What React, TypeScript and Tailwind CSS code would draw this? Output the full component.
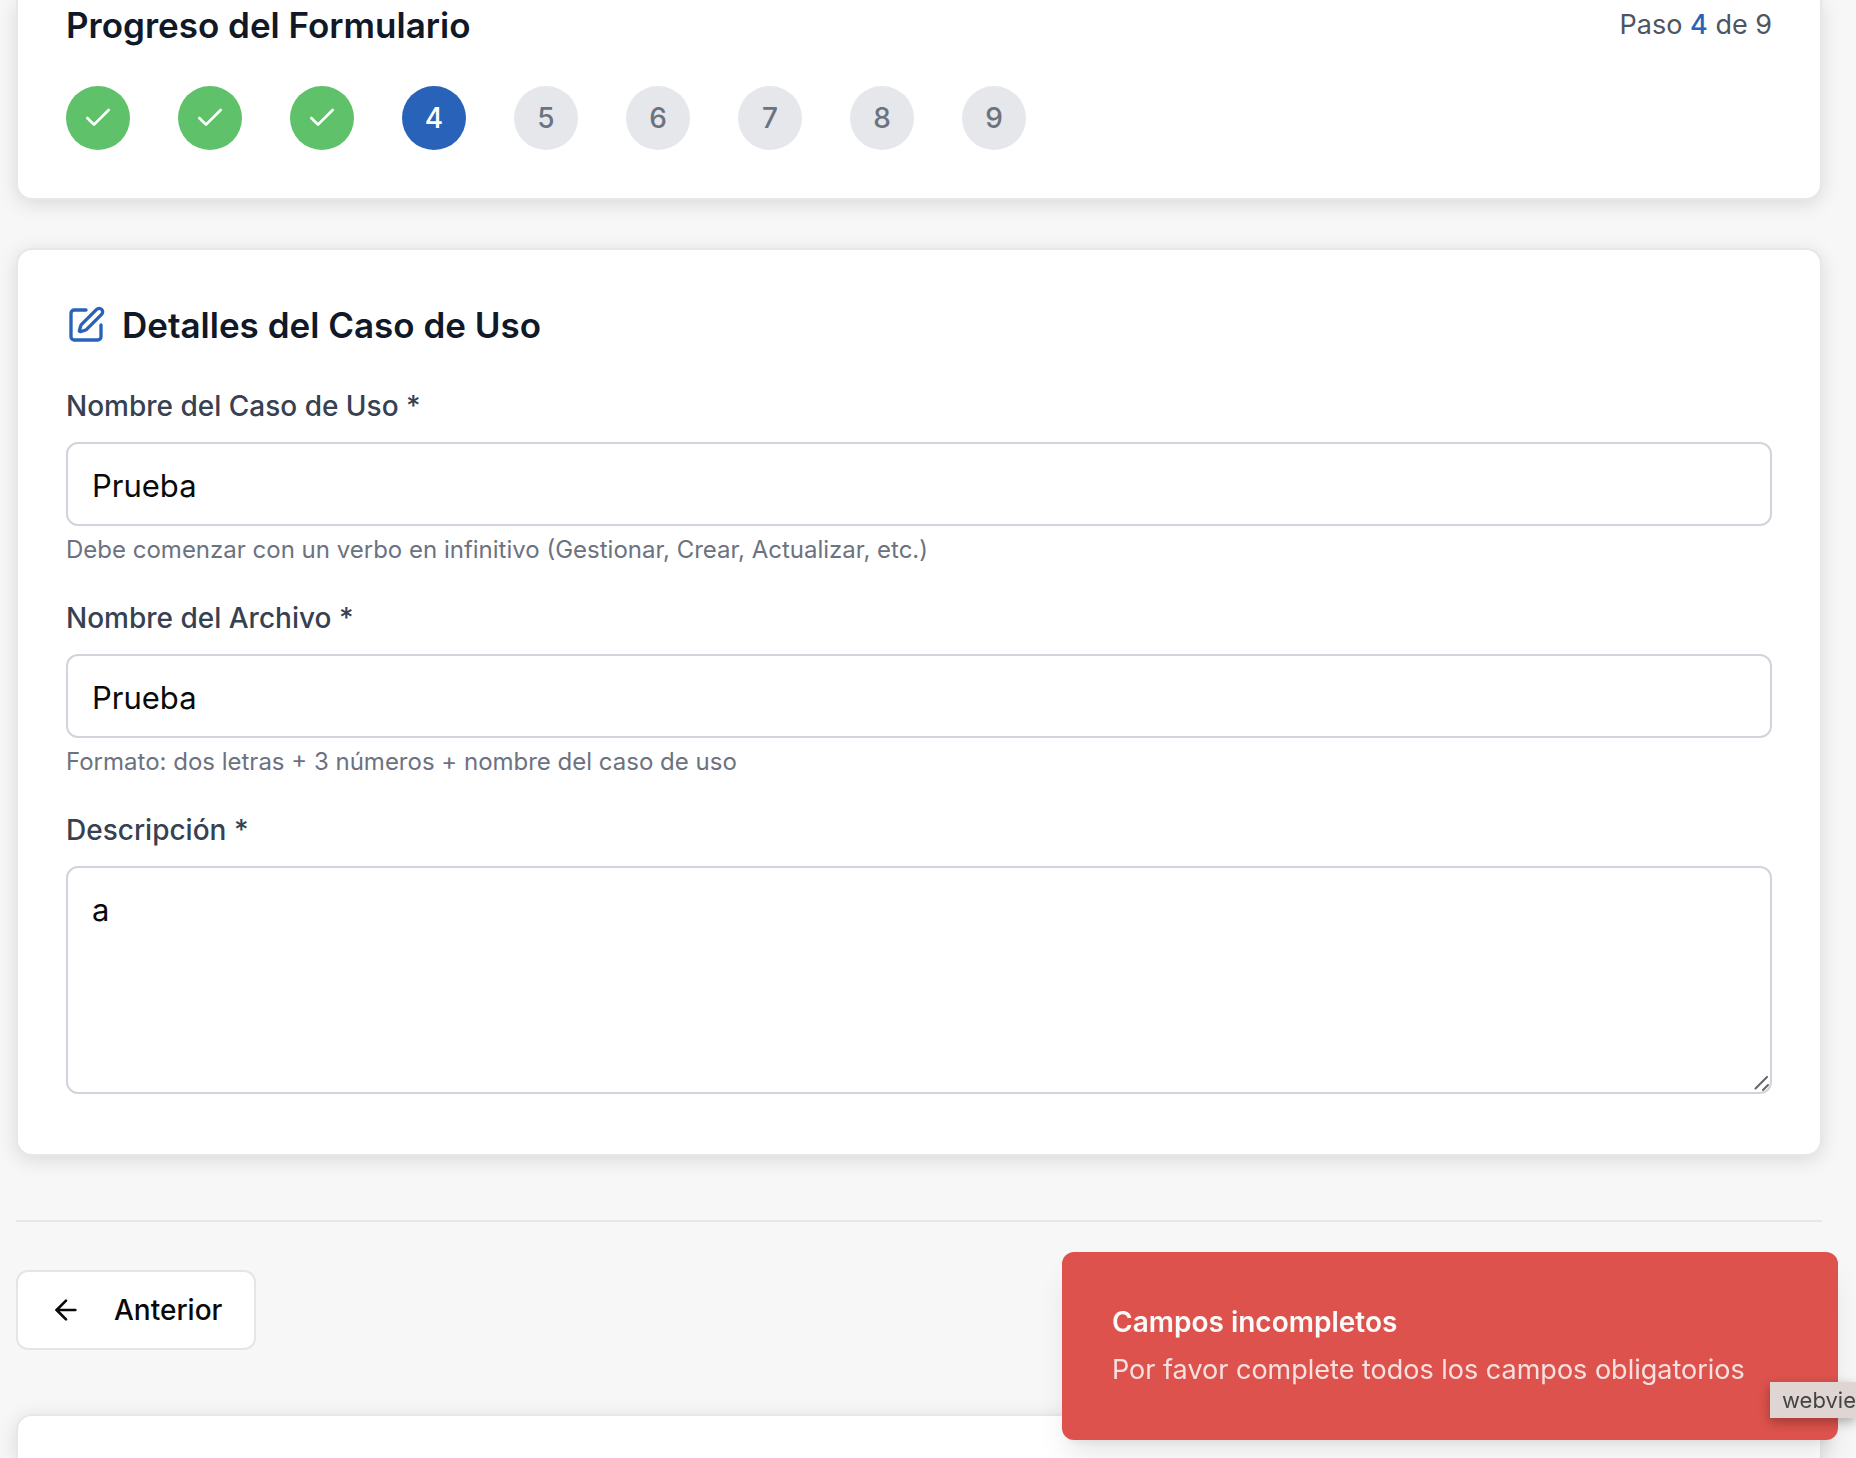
import { useState, type ReactNode } from "react";
import { ArrowLeft, Check, SquarePen } from "lucide-react";

const TOTAL_STEPS = 9;
const CURRENT_STEP = 4;

function Step({ step }: { step: number }) {
  const base = "flex size-16 shrink-0 items-center justify-center rounded-full text-[28px] font-medium";
  if (step < CURRENT_STEP) {
    return (
      <li className={`${base} bg-[#5fc26a] text-white`} aria-label={`Paso ${step} completado`}>
        <Check className="size-8" strokeWidth={2} />
      </li>
    );
  }
  if (step === CURRENT_STEP) {
    return (
      <li className={`${base} bg-[#2962b9] text-white`} aria-current="step">
        {step}
      </li>
    );
  }
  return <li className={`${base} bg-[#e5e7eb] text-[#6b7280]`}>{step}</li>;
}

function Field({ id, label, hint, children }: { id: string; label: string; hint?: string; children: ReactNode }) {
  return (
    <div>
      <label htmlFor={id} className="mb-4 block text-[28px] leading-10 font-medium text-[#374151]">
        {label}
      </label>
      {children}
      {hint && <p className="mt-2 text-2xl leading-8 text-[#6b7280]">{hint}</p>}
    </div>
  );
}

const cardShadow = "shadow-[0_4px_20px_rgba(0,0,0,0.12)]";
const control =
  "block w-full rounded-xl border-2 border-[#d1d5db] bg-white px-6 pt-[18px] pb-[14px] text-[31px] leading-[48px] text-[#0a0a0a] outline-none";

export default function App() {
  const [name, setName] = useState("Prueba");
  const [file, setFile] = useState("Prueba");
  const [description, setDescription] = useState("a");

  return (
    <main className="flex min-h-screen flex-col bg-[#f7f7f7] pr-[34px] pl-4 font-['Inter',sans-serif] text-[#0a0a0a]">
      <section className={`rounded-b-2xl border-2 border-t-0 border-[#e5e7eb] bg-white px-12 pb-12 ${cardShadow}`}>
        <header className="mb-9 flex h-[50px] items-center justify-between">
          <h2 className="text-[35px] leading-[50px] font-semibold text-[#111827]">Progreso del Formulario</h2>
          <p className="text-[27px] leading-[50px] text-[#4b5563]">
            Paso <span className="font-medium text-[#2962b9]">{CURRENT_STEP}</span> de {TOTAL_STEPS}
          </p>
        </header>
        <ol className="flex gap-12">
          {Array.from({ length: TOTAL_STEPS }, (_, i) => (
            <Step key={i} step={i + 1} />
          ))}
        </ol>
      </section>

      <section className={`mt-12 rounded-2xl border-2 border-[#e5e7eb] bg-white px-12 pt-12 pb-[60px] ${cardShadow}`}>
        <header className="mb-[34px] flex items-center gap-4">
          <SquarePen className="size-10 text-[#2962b9]" />
          <h2 className="text-[35px] leading-[54px] font-semibold text-[#111827]">Detalles del Caso de Uso</h2>
        </header>
        <form className="flex flex-col gap-8">
          <Field
            id="nombre"
            label="Nombre del Caso de Uso *"
            hint="Debe comenzar con un verbo en infinitivo (Gestionar, Crear, Actualizar, etc.)"
          >
            <input id="nombre" className={control} value={name} onChange={(e) => setName(e.target.value)} />
          </Field>
          <Field id="archivo" label="Nombre del Archivo *" hint="Formato: dos letras + 3 números + nombre del caso de uso">
            <input id="archivo" className={control} value={file} onChange={(e) => setFile(e.target.value)} />
          </Field>
          <Field id="descripcion" label="Descripción *">
            <div className="relative">
              <textarea
                id="descripcion"
                className={`${control} h-[228px] resize-none`}
                value={description}
                onChange={(e) => setDescription(e.target.value)}
              />
              <svg
                className="pointer-events-none absolute right-[2px] bottom-[2px] size-4"
                viewBox="0 0 16 16"
                fill="none"
                stroke="#666"
                strokeWidth="2"
                strokeLinecap="round"
                aria-hidden="true"
              >
                <path d="M1.5 12.5 13 1M9 14l5-5" />
              </svg>
            </div>
          </Field>
        </form>
      </section>

      <nav className="mt-16 border-t-2 border-[#e5e7eb] pt-12">
        <button
          type="button"
          className="flex h-20 items-center rounded-xl border-2 border-[#e5e5e5] bg-white px-8 text-[28px] leading-10 font-medium"
        >
          <ArrowLeft className="mr-8 size-8" />
          Anterior
        </button>
      </nav>

      <section className={`mt-16 min-h-11 flex-1 rounded-t-2xl border-2 border-b-0 border-[#e5e7eb] bg-white ${cardShadow}`} />

      <div
        role="alert"
        className="fixed right-[18px] bottom-[18px] w-[776px] rounded-xl bg-[#dd524c] p-[50px] leading-10 text-[#fafafa] shadow-[0_20px_30px_-6px_rgba(0,0,0,0.1),0_8px_12px_-8px_rgba(0,0,0,0.1)]"
      >
        <p className="mb-2 text-[28px] leading-10 font-semibold">Campos incompletos</p>
        <p className="text-[27px] leading-10 whitespace-nowrap opacity-85">Por favor complete todos los campos obligatorios</p>
      </div>

      <div
        role="tooltip"
        className="fixed right-0 bottom-10 h-9 w-[86px] overflow-hidden bg-[#dfd5d3] pl-3 text-[22px] leading-9 whitespace-nowrap text-[#444] shadow-[0_4px_12px_rgba(0,0,0,0.3)]"
      >
        webview
      </div>
    </main>
  );
}
